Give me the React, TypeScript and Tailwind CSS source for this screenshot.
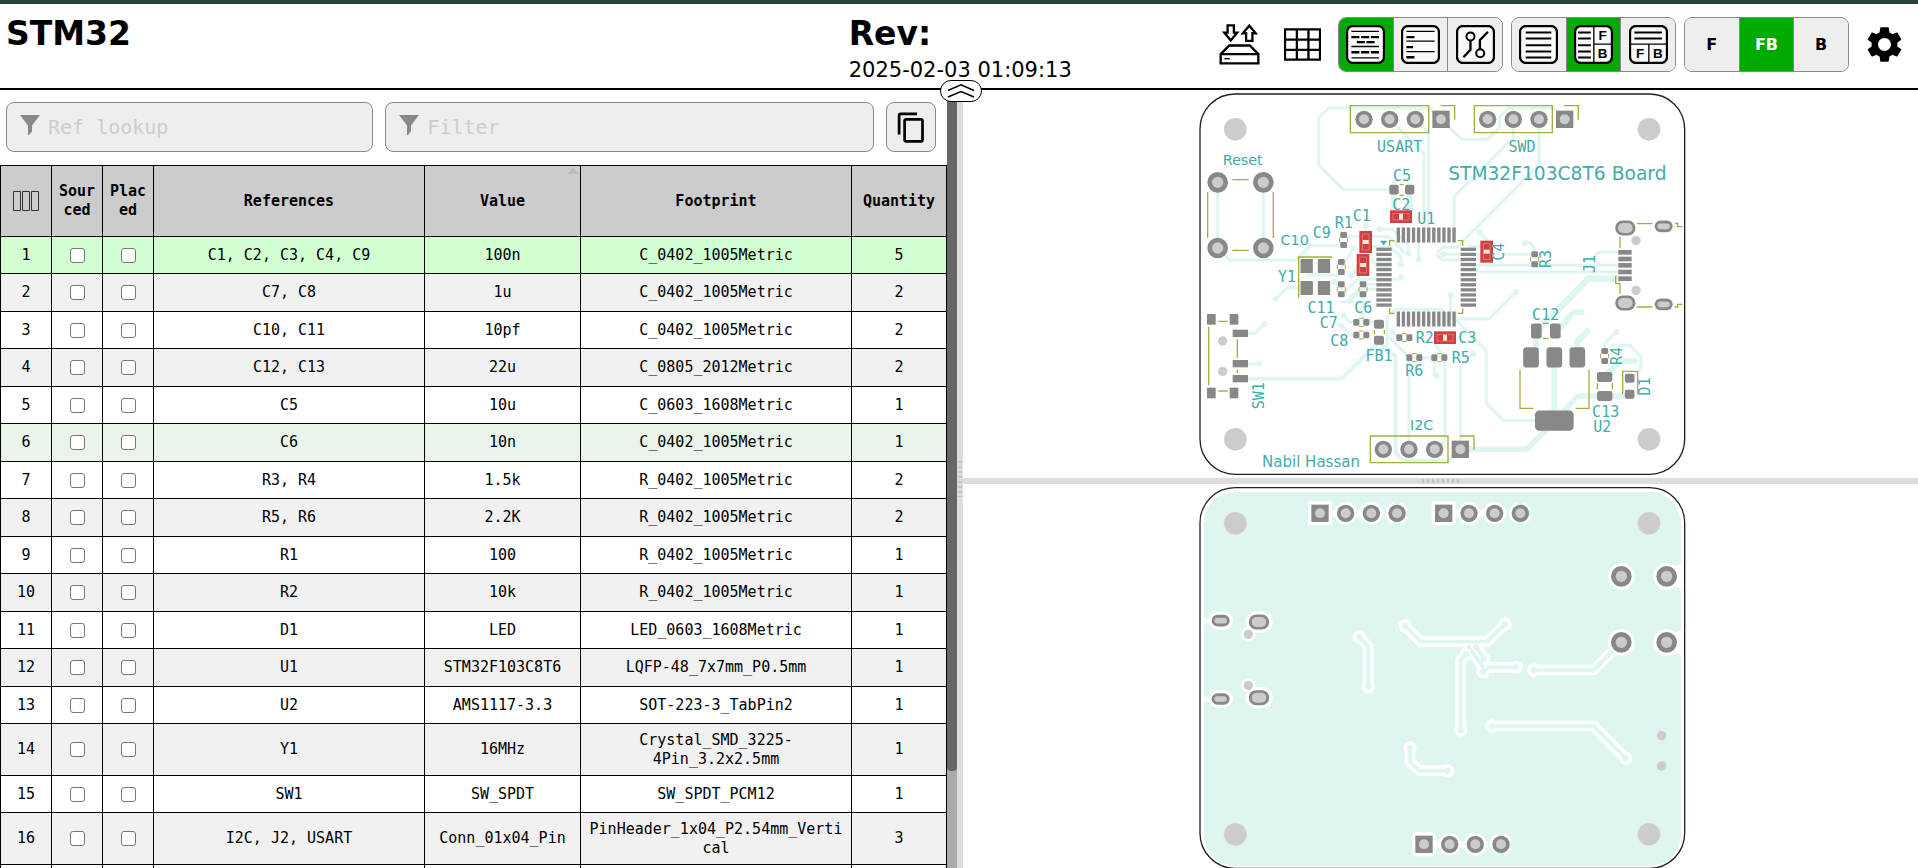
import type { ReactNode } from "react";
import { MdContentCopy, MdSettings } from "react-icons/md";

type Row = { refs: string; value: string; footprint: string; qty: number; tall?: boolean; tone?: string };

const rows: Row[] = [
  { refs: "C1, C2, C3, C4, C9", value: "100n", footprint: "C_0402_1005Metric", qty: 5, tone: "bg-[#d2ffd2]" },
  { refs: "C7, C8", value: "1u", footprint: "C_0402_1005Metric", qty: 2 },
  { refs: "C10, C11", value: "10pf", footprint: "C_0402_1005Metric", qty: 2 },
  { refs: "C12, C13", value: "22u", footprint: "C_0805_2012Metric", qty: 2 },
  { refs: "C5", value: "10u", footprint: "C_0603_1608Metric", qty: 1 },
  { refs: "C6", value: "10n", footprint: "C_0402_1005Metric", qty: 1, tone: "bg-[#eaf4ea]" },
  { refs: "R3, R4", value: "1.5k", footprint: "R_0402_1005Metric", qty: 2 },
  { refs: "R5, R6", value: "2.2K", footprint: "R_0402_1005Metric", qty: 2 },
  { refs: "R1", value: "100", footprint: "R_0402_1005Metric", qty: 1 },
  { refs: "R2", value: "10k", footprint: "R_0402_1005Metric", qty: 1 },
  { refs: "D1", value: "LED", footprint: "LED_0603_1608Metric", qty: 1 },
  { refs: "U1", value: "STM32F103C8T6", footprint: "LQFP-48_7x7mm_P0.5mm", qty: 1 },
  { refs: "U2", value: "AMS1117-3.3", footprint: "SOT-223-3_TabPin2", qty: 1 },
  { refs: "Y1", value: "16MHz", footprint: "Crystal_SMD_3225-4Pin_3.2x2.5mm", qty: 1, tall: true },
  { refs: "SW1", value: "SW_SPDT", footprint: "SW_SPDT_PCM12", qty: 1 },
  { refs: "I2C, J2, USART", value: "Conn_01x04_Pin", footprint: "PinHeader_1x04_P2.54mm_Vertical", qty: 3, tall: true },
];

const PAD = "#888888";
const HOLE = "#cccccc";
const SILK = "#aaaa44";
const TEXT = "#44aaaa";
const COPPER = "#dff5f1";
const RED = "#d04040";

/* ---------- toolbar icons ---------- */

function Frame({ children }: { children: ReactNode }) {
  return (
    <svg viewBox="0 0 116 116" className="h-[39px] w-[39px]" fill="none" stroke="#000" aria-hidden="true">
      <rect x="3" y="3" width="110" height="110" rx="18" fill="#fafafa" strokeWidth="7" />
      {children}
    </svg>
  );
}

function SaveIcon() {
  return (
    <svg viewBox="0 0 122 124" className="h-[41px] w-[41px]" fill="#fff" stroke="#000" strokeWidth="7" aria-hidden="true">
      <path d="M25 4H44V26H54L34.500 50L15 26H25Z" />
      <path d="M81 51H100V28H110L90.500 5L71 28H81Z" />
      <path d="M4 91L30 65H92L118 91V119H4Z" />
      <path d="M4 91H118" />
      <path d="M15 105H32" strokeWidth="4" />
    </svg>
  );
}

function GridIcon() {
  return (
    <svg viewBox="0 0 112 98" className="h-[33px] w-[37px]" fill="none" stroke="#000" strokeWidth="7" aria-hidden="true">
      <path d="M3 3H109V95H3ZM3 34H109M3 65H109M39 3V95M74 3V95" />
    </svg>
  );
}

const GroupedIcon = () => (
  <Frame>
    <path d="M16 19H98M16 64H98M16 98H98" strokeWidth="4" />
    <path d="M16 36H98M32 51H85M16 81H98" strokeWidth="7" strokeDasharray="24 5" />
  </Frame>
);
const UngroupedIcon = () => (
  <Frame>
    <path d="M16 19H100M16 48H100M16 79H100" strokeWidth="4" />
    <path d="M16 36H40M16 66H36M16 96H40" strokeWidth="7" />
  </Frame>
);
const NetsIcon = () => (
  <Frame>
    <path d="M43 46V74L22 96M71 72V45L95 20" strokeWidth="7" />
    <circle cx="43" cy="34" r="12" strokeWidth="6" fill="#fafafa" />
    <circle cx="72" cy="84" r="12" strokeWidth="6" fill="#fafafa" />
  </Frame>
);
const BomOnlyIcon = () => (
  <Frame>
    <path d="M20 22H96M20 40H96M20 60H96M20 79H96M20 97H96" strokeWidth="6" />
  </Frame>
);
const letter = "fill-black stroke-none font-['Liberation_Sans'] text-[40px] font-bold";
const LeftRightIcon = () => (
  <Frame>
    <path d="M12 22H50M12 40H50M12 60H50M12 79H50M12 97H50" strokeWidth="6" />
    <path d="M59 4V112M59 57H112" strokeWidth="4" />
    <text x="85" y="46" textAnchor="middle" className={letter}>F</text>
    <text x="85" y="99" textAnchor="middle" className={letter}>B</text>
  </Frame>
);
const TopBottomIcon = () => (
  <Frame>
    <path d="M16 22H98M16 40H98" strokeWidth="6" />
    <path d="M4 57H112M59 57V112" strokeWidth="4" />
    <text x="33" y="99" textAnchor="middle" className={letter}>F</text>
    <text x="86" y="99" textAnchor="middle" className={letter}>B</text>
  </Frame>
);

function Segmented({ items, active }: { items: { label: string; body: ReactNode }[]; active: number }) {
  return (
    <div className="flex h-[55px] w-[165px] overflow-hidden rounded-lg border border-[#888]">
      {items.map((it, i) => (
        <button
          key={it.label}
          type="button"
          aria-label={it.label}
          aria-pressed={i === active}
          className={`flex flex-1 items-center justify-center border-[#888] font-['DejaVu_Sans',sans-serif] text-base font-bold ${i > 0 ? "border-l" : ""} ${i === active ? "bg-[#00aa00] text-white" : "bg-[#eee] text-black"}`}
        >
          {it.body}
        </button>
      ))}
    </div>
  );
}

/* ---------- board pieces ---------- */

function Round({ x, y, r = 26, h = 15 }: { x: number; y: number; r?: number; h?: number }) {
  return (
    <>
      <circle cx={x} cy={y} r={r} fill={PAD} />
      <circle cx={x} cy={y} r={h} fill={HOLE} />
    </>
  );
}

function SquarePin({ x, y }: { x: number; y: number }) {
  return (
    <>
      <rect x={x - 26} y={y - 26} width="52" height="52" fill={PAD} />
      <circle cx={x} cy={y} r="15" fill={HOLE} />
    </>
  );
}

function Oval({ x, y, w, h, hw, hh }: { x: number; y: number; w: number; h: number; hw: number; hh: number }) {
  return (
    <>
      <rect x={x - w / 2} y={y - h / 2} width={w} height={h} rx={h / 2} fill={PAD} />
      <rect x={x - hw / 2} y={y - hh / 2} width={hw} height={hh} rx={hh / 2} fill={HOLE} />
    </>
  );
}

function Box({ x, y, w, h, r = 0 }: { x: number; y: number; w: number; h: number; r?: number }) {
  return <rect x={x - w / 2} y={y - h / 2} width={w} height={h} rx={r} fill={PAD} />;
}

function Chip({ x, y, turn = false }: { x: number; y: number; turn?: boolean }) {
  return (
    <g transform={`translate(${x} ${y})${turn ? " rotate(90)" : ""}`}>
      <path d="M-7 -12H7M-7 12H7" stroke={SILK} strokeWidth="3" />
      <Box x={-15} y={0} w={18} h={20} r={4} />
      <Box x={15} y={0} w={18} h={20} r={4} />
    </g>
  );
}

function HotChip({ x, y, turn = false }: { x: number; y: number; turn?: boolean }) {
  return (
    <g transform={`translate(${x} ${y})${turn ? " rotate(90)" : ""}`}>
      <rect x="-33" y="-19" width="66" height="38" fill={RED} />
      <rect x="-24" y="-10" width="48" height="20" fill="none" stroke="#e58a8a" strokeWidth="2" />
      <rect x="-6" y="-9" width="12" height="18" fill="#fbe6dc" />
    </g>
  );
}

type LabelProps = { x: number; y: number; s?: number; up?: boolean; wide?: boolean; children: string };

function Label({ x, y, s = 45, up = false, wide = false, children }: LabelProps) {
  return (
    <text
      x={x}
      y={y}
      fontSize={s}
      fill={TEXT}
      textAnchor="middle"
      transform={up ? `rotate(-90 ${x} ${y})` : undefined}
      className={wide ? "font-['DejaVu_Sans',sans-serif]" : "font-['DejaVu_Sans_Mono',monospace]"}
    >
      {children}
    </text>
  );
}

const mounts: [number, number][] = [[136, 0], [1377, 0], [136, 1], [1377, 1]];
const pins = Array.from({ length: 12 }, (_, i) => i);

const frontVias: [number, number][] = [
  [527, 421], [568, 433], [655, 505], [686, 524], [633, 538], [634, 576], [491, 490], [483, 573], [433, 591],
  [257, 642], [482, 648], [461, 692], [454, 722], [224, 716], [208, 836], [608, 740], [740, 872], [850, 806],
  [978, 621], [782, 630], [867, 441], [1004, 475], [1279, 742], [760, 508],
];

function FrontBoard() {
  return (
    <svg viewBox="-681 15 2865 1164" className="h-full w-full" role="img" aria-label="Front side">
      <g fill="none" stroke={COPPER} strokeWidth="9" strokeLinejoin="round" strokeLinecap="round">
        <path d="M600 314H460L386 240V98L416 69H718L753 103L815 163H892L928 127V97L955 69H1090L1124 103" />
        <path d="M599 103L702 205V440M676 103L716 143V440M970 103V158L792 335V440M1047 103V240L800 487H760L744 500V515L757 525H815" />
        <path d="M83 292V489L120 526H316L361 482H450M220 292V489M461 455H596L640 500M568 433H608L655 480V505M686 440V524" />
        <path d="M527 421V450M640 440V470M546 485H600L633 515V538M546 524L560 545H600M350 570H440L491 490M483 573L520 535M433 591L455 610" />
        <path d="M326 609H290L257 642M454 630L504 582H633M454 650H480L530 598H600M482 648V635L510 612H600" />
        <path d="M174 745H195L224 716M174 836H208M461 692L480 712H505M454 722L485 750H505M519 620V712H553" />
        <path d="M591 800V697L617 673H755L770 690V720M591 750L657 817V1093M608 740L625 758M673 818H748M733 818V872M735 777L765 817V1070L734 1093" />
        <path d="M782 630V700M792 702H897L978 621M795 702L889 797V955L941 1007H1040M811 1093V845L850 806" />
        <path d="M867 441L890 465M857 508H1025M760 508H815M838 485H880M1004 475H1022L1034 490V505M857 541H1285M850 548L865 561H1285M1285 502H1225L1205 522" />
        <path d="M1244 795V775L1279 742M1265 781H1320L1353 815V850L1320 885" />
        <path d="M567 770L617 815V1105L640 1127H775L811 1093" strokeWidth="12" />
        <path d="M174 881H455L567 770" strokeWidth="12" />
        <path d="M1285 581H1195L1050 730" strokeWidth="20" />
        <path d="M1038 735V817M1093 817V1000M1105 735L1150 682H1175M1163 817V768L1193 738" strokeWidth="18" />
        <path d="M1093 1007L1165 933H1320M811 1093H1010L1093 1010M1244 875L1290 828H1335" strokeWidth="17" />
        <path d="M612 320V375M659 320V375" strokeWidth="17" />
      </g>
      {frontVias.map(([x, y]) => <circle key={`${x}-${y}`} cx={x} cy={y} r="9" fill={COPPER} />)}

      <rect x="30" y="27" width="1454" height="1141" rx="105" fill="none" stroke="#222" strokeWidth="4" />
      {mounts.map(([x, b]) => <circle key={`${x}-${b}`} cx={x} cy={b ? 1063 : 133} r="34" fill={HOLE} />)}

      <g fill="none" stroke={SILK} strokeWidth="4">
        <path d="M481 62H716V143H481ZM752 62H794V104M853 62H1087V143H853ZM1122 62H1165V104M541 1053H774V1133H541ZM810 1053H852V1094" />
        <path d="M127 284H176M127 496H176M53 321V459M250 321V459M629 299H641M629 331H641" />
        <path d="M427 516H326V638M599 482V467H614M803 467H818V482M599 670V685H614M803 685H818V670" />
        <path d="M1340 416H1387M1340 666H1387M1455 415H1463V425H1477M1455 666H1463V658H1477M1290 455V488M1277 572V596H1290V627" />
        <path d="M85 709H113M85 918H113M56 726V901M142 763V819M142 854V864" />
        <path d="M553 735V748M583 735V748M1058 715H1076M1058 760H1076M990 854V970H1030M1197 854V970H1157" />
        <path d="M1222 895V913M1267 895V913M1298 928V859H1343V928" />
      </g>
      <path d="M570 467H592L581 481Z" fill={TEXT} />

      {[522, 599, 676, 893, 970, 1047].map((x) => <Round key={x} x={x} y={103} />)}
      <SquarePin x={753} y={103} />
      <SquarePin x={1124} y={103} />
      {[580, 657, 734].map((x) => <Round key={x} x={x} y={1093} />)}
      <SquarePin x={811} y={1093} />
      <Round x={83} y={292} r={31} h={17} />
      <Round x={220} y={292} r={31} h={17} />
      <Round x={83} y={489} r={31} h={17} />
      <Round x={220} y={489} r={31} h={17} />

      <Box x={612} y={314} w={28} h={29} r={6} />
      <Box x={659} y={314} w={28} h={29} r={6} />
      <Chip x={461} y={465} turn />
      <Chip x={454} y={546} turn />
      <Chip x={454} y={613} turn />
      <Chip x={519} y={613} turn />
      <Chip x={1034} y={523} turn />
      <Chip x={1244} y={813} turn />
      <Chip x={514} y={712} />
      <Chip x={514} y={750} />
      <Chip x={643} y={758} />
      <Chip x={673} y={818} />
      <Chip x={748} y={818} />
      <Box x={567} y={718} w={30} h={27} r={6} />
      <Box x={567} y={766} w={30} h={27} r={6} />

      <Box x={350} y={543} w={37} h={42} />
      <Box x={402} y={543} w={37} h={42} />
      <Box x={350} y={609} w={37} h={42} />
      <Box x={402} y={609} w={37} h={42} />

      {pins.map((i) => {
        const p = i * 15.2;
        return (
          <g key={i}>
            <Box x={582} y={493 + p} w={46} h={10} />
            <Box x={835} y={493 + p} w={46} h={10} />
            <Box x={625 + p} y={450} w={10} h={45} />
            <Box x={625 + p} y={702} w={10} h={45} />
          </g>
        );
      })}

      <Oval x={1306} y={429} w={61} h={45} hw={44} hh={30} />
      <Oval x={1421} y={424} w={54} h={35} hw={37} hh={17} />
      <Oval x={1306} y={654} w={61} h={45} hw={44} hh={30} />
      <Oval x={1421} y={658} w={54} h={35} hw={37} hh={17} />
      <circle cx="1338" cy="466" r="14" fill={HOLE} />
      <circle cx="1338" cy="616" r="14" fill={HOLE} />
      {[502, 522, 541, 561, 581].map((y) => <Box key={y} x={1305} y={y} w={40} h={14} />)}

      {[703, 924].map((y) => (
        <g key={y}>
          <Box x={64} y={y} w={26} h={32} />
          <Box x={132} y={y} w={26} h={32} />
        </g>
      ))}
      {[745, 836, 881].map((y) => <Box key={y} x={151} y={y} w={46} h={22} />)}
      <circle cx="98" cy="768" r="14" fill={HOLE} />
      <circle cx="98" cy="859" r="14" fill={HOLE} />

      <Box x={1039} y={738} w={32} h={45} r={7} />
      <Box x={1096} y={738} w={32} h={45} r={7} />
      {[1023, 1093, 1162].map((x) => <Box key={x} x={x} y={817} w={47} h={61} r={10} />)}
      <Box x={1093} y={1007} w={116} h={61} r={13} />
      <Box x={1244} y={876} w={46} h={30} r={7} />
      <Box x={1244} y={933} w={46} h={30} r={7} />
      <Box x={1319} y={880} w={29} h={27} r={6} />
      <Box x={1319} y={928} w={29} h={27} r={6} />

      <HotChip x={633} y={395} />
      <HotChip x={765} y={758} />
      <HotChip x={527} y={471} turn />
      <HotChip x={519} y={540} turn />
      <HotChip x={890} y={500} turn />

      <Label x={629} y={202}>USART</Label>
      <Label x={996} y={202}>SWD</Label>
      <Label x={158} y={241} s={43} wide>Reset</Label>
      <Label x={1102} y={284} s={56} wide>STM32F103C8T6 Board</Label>
      <Label x={636} y={288}>C5</Label>
      <Label x={634} y={376}>C2</Label>
      <Label x={709} y={416}>U1</Label>
      <Label x={515} y={407}>C1</Label>
      <Label x={461} y={430}>R1</Label>
      <Label x={395} y={458}>C9</Label>
      <Label x={314} y={481} s={43} wide>C10</Label>
      <Label x={291} y={592}>Y1</Label>
      <Label x={941} y={500} up>C4</Label>
      <Label x={1084} y={522} up>R3</Label>
      <Label x={1215} y={537} up>J1</Label>
      <Label x={393} y={683}>C11</Label>
      <Label x={520} y={683}>C6</Label>
      <Label x={416} y={730}>C7</Label>
      <Label x={448} y={782}>C8</Label>
      <Label x={567} y={827}>FB1</Label>
      <Label x={704} y={775}>R2</Label>
      <Label x={832} y={775}>C3</Label>
      <Label x={673} y={873}>R6</Label>
      <Label x={812} y={835}>R5</Label>
      <Label x={222} y={932} up>SW1</Label>
      <Label x={695} y={1034} s={43} wide>I2C</Label>
      <Label x={363} y={1146} wide>Nabil Hassan</Label>
      <Label x={1067} y={704}>C12</Label>
      <Label x={1297} y={813} up>R4</Label>
      <Label x={1379} y={904} up>D1</Label>
      <Label x={1247} y={997}>C13</Label>
      <Label x={1237} y={1042}>U2</Label>
    </svg>
  );
}

const backTracks = [
  "M508 471L535 500V620",
  "M645 438L692 485H892L945 432",
  "M829 522L812 540V750",
  "M660 804V845L688 872H773",
  "M835 500L879 560M879 575L895 562H978",
  "M859 502L881 535",
  "M1031 570H1211L1294 487",
  "M905 738H1211L1307 835",
];
const backVias: [number, number][] = [
  [508, 471], [535, 620], [645, 438], [945, 432], [829, 522], [812, 750], [660, 804], [773, 872],
  [879, 575], [978, 562], [859, 502], [881, 537], [1031, 570], [905, 738], [1307, 835],
];
const backRound: [number, number, boolean][] = [
  [467, 100, false], [544, 100, false], [621, 100, true], [837, 100, false], [914, 100, false], [991, 100, true],
  [779, 1093, false], [856, 1093, false], [933, 1093, true],
];
const backSquare: [number, number][] = [[390, 100], [761, 100], [702, 1093]];
const resetPads: [number, number][] = [[1294, 289], [1430, 289], [1294, 487], [1430, 487]];

function BackBoard() {
  return (
    <svg viewBox="-681 12 2865 1152" className="h-full w-full" preserveAspectRatio="xMidYMin meet" role="img" aria-label="Back side">
      <rect x="41" y="35" width="1432" height="1123" rx="96" fill={COPPER} />
      <rect x="30" y="23" width="1454" height="1142" rx="105" fill="none" stroke="#222" strokeWidth="4" />
      {mounts.map(([x, b]) => (
        <circle key={`${x}-${b}`} cx={x} cy={b ? 1063 : 130} r="35" fill={HOLE} stroke="#eee" strokeWidth="2" />
      ))}

      <g fill="none" strokeLinejoin="round" strokeLinecap="round">
        {backTracks.map((d) => <path key={d} d={d} stroke="#fff" strokeWidth="32" />)}
        {backVias.map(([x, y]) => <circle key={`${x}-${y}`} cx={x} cy={y} r="20" fill="#fff" />)}
        {backTracks.map((d) => <path key={d} d={d} stroke={COPPER} strokeWidth="11" />)}
        {backVias.map(([x, y]) => <circle key={`${x}-${y}`} cx={x} cy={y} r="9" fill={COPPER} />)}
      </g>

      <g fill="#fff">
        {backSquare.map(([x, y]) => (
          <g key={x}>
            <rect x={x - 36} y={y - 36} width="72" height="72" rx="9" />
            <rect x={x + 30} y={y - 10} width="160" height="20" />
          </g>
        ))}
        {backRound.map(([x, y]) => <circle key={x} cx={x} cy={y} r="34" />)}
        {resetPads.map(([x, y]) => <circle key={`${x}-${y}`} cx={x} cy={y} r="40" />)}
        <path d="M1440 258H1462L1474 248V330L1462 320H1440ZM1440 456H1462L1474 446V528L1462 518H1440Z" />
        <path d="M40 412L52 418H70V428H52L40 434ZM40 647L52 653H70V663H52L40 669Z" />
        <rect x="56" y="395" width="73" height="54" rx="27" />
        <rect x="56" y="630" width="73" height="54" rx="27" />
        <rect x="167" y="394" width="81" height="64" rx="32" />
        <rect x="167" y="621" width="81" height="64" rx="32" />
        <circle cx="175" cy="463" r="22" />
        <circle cx="175" cy="616" r="22" />
      </g>
      <path d="M1211 570L1294 487" stroke={COPPER} strokeWidth="11" />
      {backRound.filter(([, , ground]) => ground).map(([x, y]) => (
        <path key={x} d={`M${x} ${y - 36}V${y + 36}M${x} ${y}H${x + 36}`} stroke={COPPER} strokeWidth="20" />
      ))}

      {backSquare.map(([x, y]) => <SquarePin key={x} x={x} y={y} />)}
      {backRound.map(([x, y]) => <Round key={x} x={x} y={y} />)}
      {resetPads.map(([x, y]) => <Round key={`${x}-${y}`} x={x} y={y} r={31} h={17} />)}
      <Oval x={92} y={422} w={54} h={35} hw={37} hh={17} />
      <Oval x={92} y={657} w={54} h={35} hw={37} hh={17} />
      <Oval x={207} y={426} w={61} h={45} hw={44} hh={30} />
      <Oval x={207} y={653} w={61} h={45} hw={44} hh={30} />
      <circle cx="175" cy="463" r="14" fill={HOLE} />
      <circle cx="175" cy="616" r="14" fill={HOLE} />
      <circle cx="1415" cy="767" r="15" fill={HOLE} stroke="#eee" strokeWidth="2" />
      <circle cx="1415" cy="858" r="15" fill={HOLE} stroke="#eee" strokeWidth="2" />
    </svg>
  );
}

/* ---------- left pane ---------- */

function Search({ id, label, grow }: { id: string; label: string; grow: string }) {
  return (
    <label htmlFor={id} className={`flex h-[50px] min-w-0 items-center rounded-lg border border-[#888] bg-[#eee] pl-[13px] ${grow}`}>
      <svg viewBox="0 0 20 20" className="mb-1 h-5 w-5 shrink-0" fill="#888" aria-hidden="true">
        <path d="M0 0H20L12 10.500V16.500L9 20H8V10.500Z" />
      </svg>
      <input
        id={id}
        aria-label={label}
        placeholder={label}
        className="ml-2 w-full min-w-0 bg-transparent font-['DejaVu_Sans_Mono',monospace] text-xl outline-none placeholder:text-[#ccc]"
      />
    </label>
  );
}

const cell = "border border-black px-[6px] py-[6px]";

function Tick({ label }: { label: string }) {
  return (
    <input
      type="checkbox"
      aria-label={label}
      className="mx-auto block h-[15px] w-[15px] appearance-none rounded-[3px] border border-[#767676] bg-white"
    />
  );
}

function BomTable() {
  return (
    <table className="w-full table-fixed border-collapse text-center font-['DejaVu_Sans_Mono',monospace] text-[15px] leading-[19px] wrap-break-word">
      <colgroup>
        <col className="w-[51px]" />
        <col className="w-[51px]" />
        <col className="w-[51px]" />
        <col />
        <col className="w-[156px]" />
        <col />
        <col className="w-[95px]" />
      </colgroup>
      <thead>
        <tr className="h-[71px] bg-[#ccc]">
          <th className={cell}>
            <svg viewBox="0 0 26 20" className="mx-auto h-5 w-[26px]" fill="none" stroke="#333" aria-label="Columns">
              <path d="M.5 .5h7v19h-7zM9.500 .5h7v19h-7zM18.500 .5h7v19h-7z" />
            </svg>
          </th>
          <th className={cell}>Sourced</th>
          <th className={cell}>Placed</th>
          <th className={cell}>References</th>
          <th className={`${cell} relative`}>
            Value
            <span className="absolute top-0.5 right-px border-x-[6px] border-b-[6px] border-x-transparent border-b-[#bbb]" />
          </th>
          <th className={cell}>Footprint</th>
          <th className={cell}>Quantity</th>
        </tr>
      </thead>
      <tbody>
        {rows.map((r, i) => (
          <tr
            key={r.refs}
            className={`${r.tall ? "h-[52px]" : i % 2 ? "h-[38px]" : "h-[37px]"} ${r.tone ?? (i % 2 ? "bg-[#f1f1f1]" : "bg-white")}`}
          >
            <td className={cell}>{i + 1}</td>
            <td className={cell}><Tick label={`Sourced ${r.refs}`} /></td>
            <td className={cell}><Tick label={`Placed ${r.refs}`} /></td>
            <td className={cell}>{r.refs}</td>
            <td className={cell}>{r.value}</td>
            <td className={cell}>{r.footprint}</td>
            <td className={cell}>{r.qty}</td>
          </tr>
        ))}
        <tr className="h-[37px]">
          {[0, 1, 2, 3, 4, 5, 6].map((n) => <td key={n} className={cell} />)}
        </tr>
      </tbody>
    </table>
  );
}

export default function App() {
  return (
    <div className="flex h-screen flex-col overflow-hidden bg-white text-black">
      <header className="relative flex h-[90px] shrink-0 border-t-4 border-b-2 border-t-[#2a4342] border-b-black font-['DejaVu_Sans',sans-serif]">
        <h1 className="w-[44.25%] shrink-0 pt-[10px] pl-[6px] text-[33px] leading-10 font-bold">STM32</h1>
        <div className="flex-1 pt-[10px] whitespace-nowrap">
          <div className="text-[33px] leading-10 font-bold">Rev:</div>
          <div className="text-[21px] leading-8">2025-02-03 01:09:13</div>
        </div>
        <div className="mt-[13px] flex h-[55px] items-center pr-3">
          <button type="button" aria-label="Save or load" className="mr-6"><SaveIcon /></button>
          <button type="button" aria-label="Statistics" className="mr-[17px]"><GridIcon /></button>
          <div className="flex gap-2">
            <Segmented
              active={0}
              items={[
                { label: "Grouped", body: <GroupedIcon /> },
                { label: "Ungrouped", body: <UngroupedIcon /> },
                { label: "Netlist", body: <NetsIcon /> },
              ]}
            />
            <Segmented
              active={1}
              items={[
                { label: "Table only", body: <BomOnlyIcon /> },
                { label: "Side by side", body: <LeftRightIcon /> },
                { label: "Stacked", body: <TopBottomIcon /> },
              ]}
            />
            <Segmented
              active={1}
              items={[
                { label: "F", body: "F" },
                { label: "FB", body: "FB" },
                { label: "B", body: "B" },
              ]}
            />
          </div>
          <button type="button" aria-label="Settings" className="ml-[14px]"><MdSettings size={43} /></button>
        </div>
        <button
          type="button"
          aria-label="Collapse header"
          className="absolute -bottom-[14px] left-[calc(50%+2px)] z-10 flex h-[22px] w-[42px] -translate-x-1/2 items-center justify-center rounded-[11px] border border-black bg-white"
        >
          <svg viewBox="0 0 28 14" className="h-[14px] w-7" fill="none" stroke="#000" strokeWidth="1.5" aria-hidden="true">
            <path d="M1 6.500L14 .8L27 6.500M1 13L14 7.500L27 13" />
          </svg>
        </button>
      </header>

      <main className="flex min-h-0 flex-1">
        <section className="flex w-[calc(50%-2px)] shrink-0">
          <div className="min-w-0 flex-1 overflow-hidden">
            <div className="flex h-[75px] items-start gap-3 pt-3 pr-[11px] pl-[6px]">
              <Search id="ref" label="Ref lookup" grow="w-[39.5%]" />
              <Search id="filter" label="Filter" grow="flex-1" />
              <button type="button" aria-label="Copy table" className="flex h-[50px] w-[50px] shrink-0 items-center justify-center rounded-lg border border-[#888] bg-[#eee]">
                <MdContentCopy size={33} />
              </button>
            </div>
            <BomTable />
          </div>
          <div className="w-[10px] bg-[#aaa]">
            <div className="h-[87.5%] rounded-b bg-[#666]" />
          </div>
        </section>
        <div className="flex w-[6px] shrink-0 items-center justify-center bg-[#ddd]">
          <div className="h-9 w-1 bg-[repeating-linear-gradient(#c4c4c4_0_2px,transparent_2px_5px)]" />
        </div>
        <section className="flex min-w-0 flex-1 flex-col">
          <div className="min-h-0 flex-[388]"><FrontBoard /></div>
          <div className="flex h-[6px] shrink-0 items-center justify-center bg-[#ddd]">
            <div className="h-1 w-[38px] bg-[repeating-linear-gradient(90deg,#c4c4c4_0_2px,transparent_2px_5px)]" />
          </div>
          <div className="min-h-0 flex-[384]"><BackBoard /></div>
        </section>
      </main>
    </div>
  );
}
